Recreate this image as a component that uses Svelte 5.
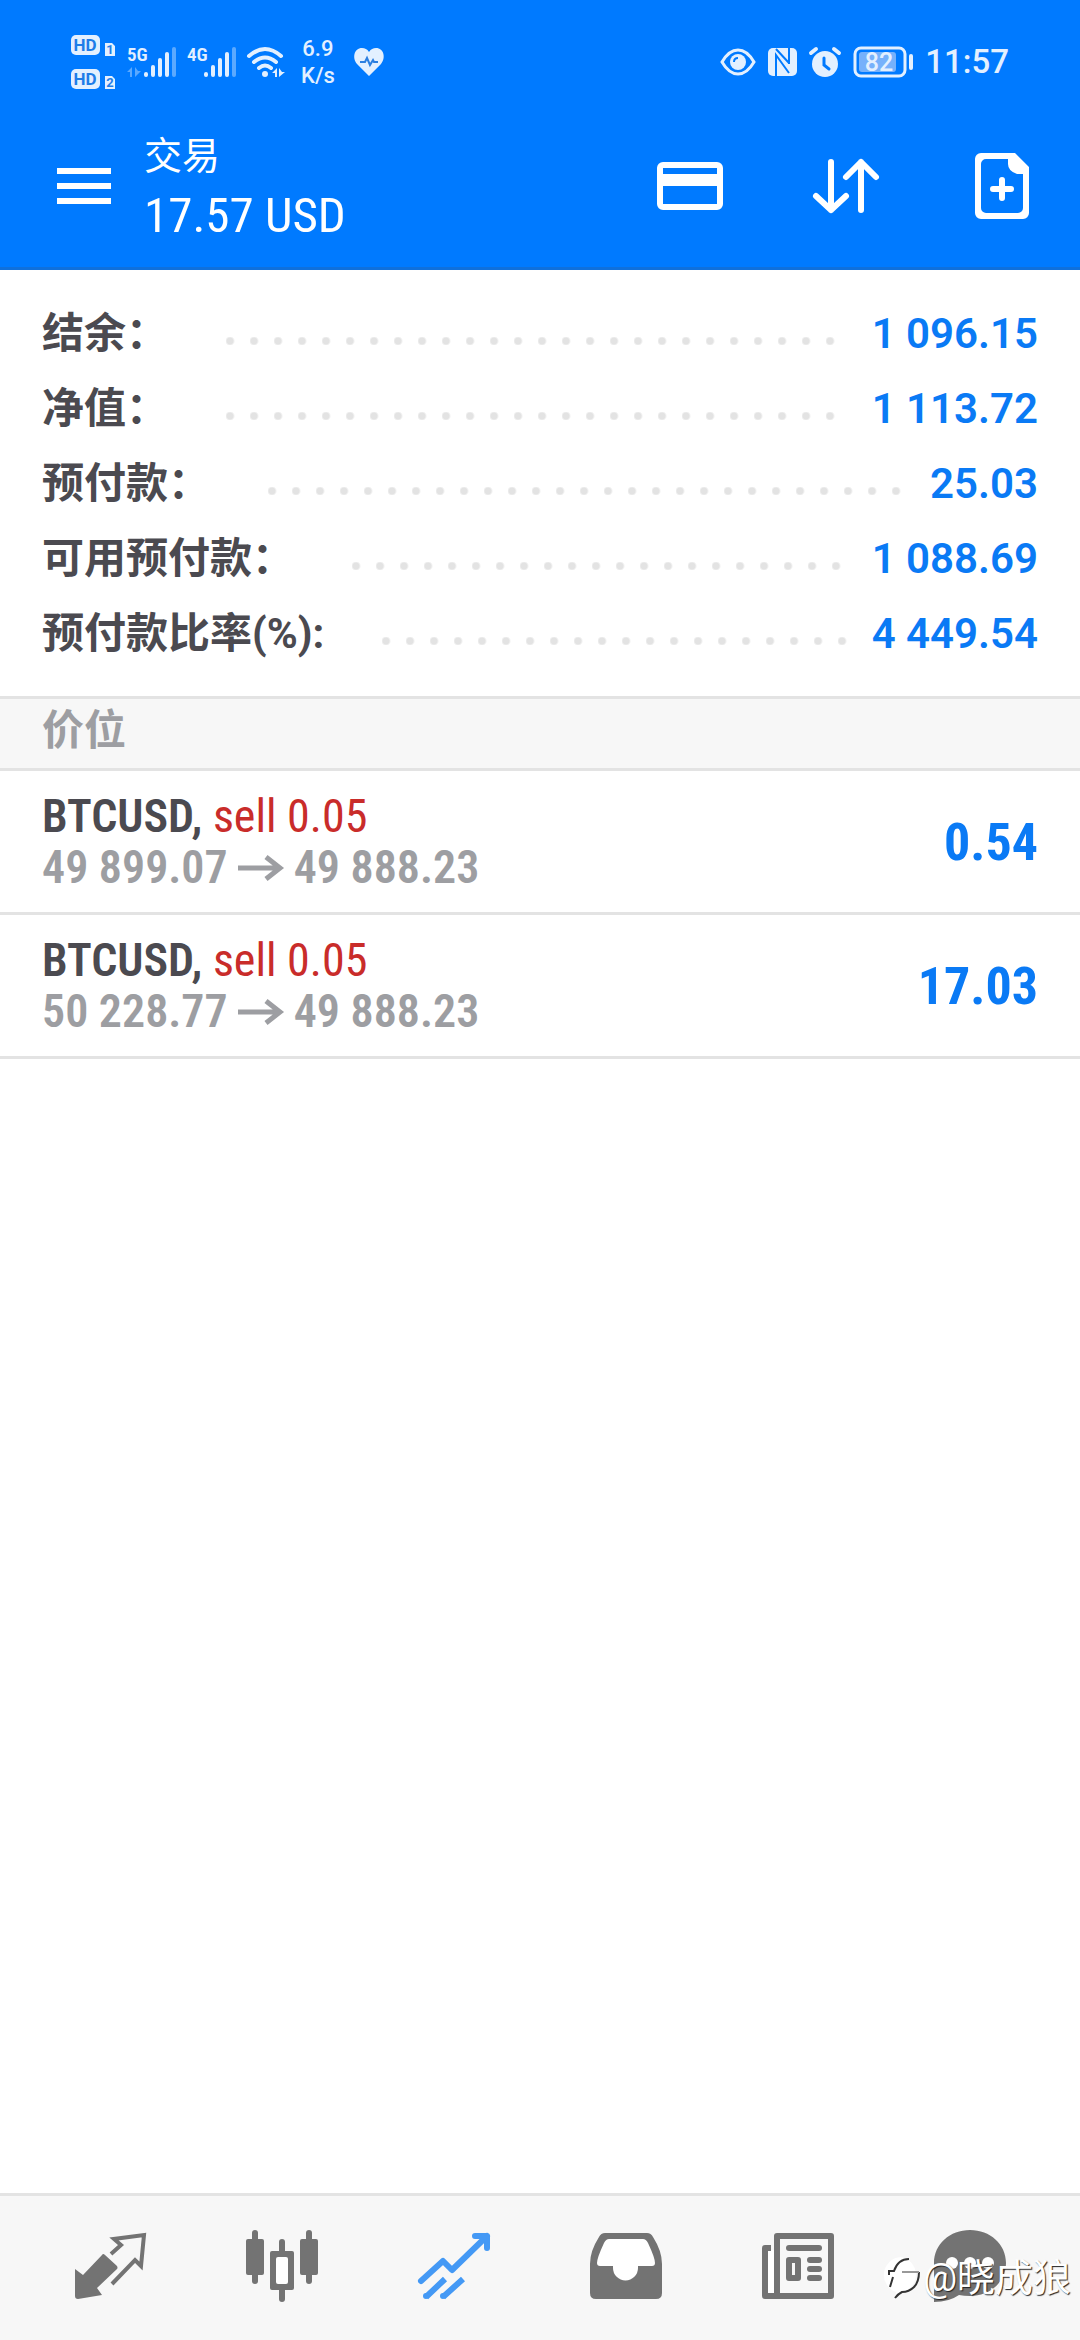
<script>
  const summary = [
    { label: "结余：", value: "1 096.15" },
    { label: "净值：", value: "1 113.72" },
    { label: "预付款：", value: "25.03" },
    { label: "可用预付款：", value: "1 088.69" },
    { label: "预付款比率(%):", value: "4 449.54" },
  ];

  const positions = [
    { symbol: "BTCUSD", side: "sell 0.05", open: "49 899.07", now: "49 888.23", profit: "0.54" },
    { symbol: "BTCUSD", side: "sell 0.05", open: "50 228.77", now: "49 888.23", profit: "17.03" },
  ];

  const tabs = ["行情", "图表", "交易", "历史", "新闻", "消息"];
  let active = 2;
</script>

{#snippet signal(name, arrows)}
  <svg width="50" height="30" viewBox="0 0 50 30" fill="#e3f0ff">
    <text class="narrow" x="0" y="14" font-size="19" font-weight="600">{name}</text>
    {#if arrows}
      <path d="M0 25l5-5v10H3v-5zM8 20v10l6-6H11z" opacity="0.4" />
    {/if}
    <rect x="17" y="25" width="4" height="5" rx="2" />
    <rect x="24" y="18" width="4" height="12" rx="2" />
    <rect x="31" y="11" width="4" height="19" rx="2" />
    <rect x="38" y="5" width="4" height="25" rx="2" />
    <rect x="45" y="0" width="4" height="30" rx="2" opacity="0.4" />
  </svg>
{/snippet}

<div class="screen">
  <header>
    <div class="status">
      <div class="group left">
        <svg width="46" height="56" viewBox="0 0 46 56" fill="#e3f0ff">
          <rect x="0" y="1" width="29" height="20" rx="5" />
          <rect x="0" y="35" width="29" height="20" rx="5" />
          <path d="M34 9h7l3 3v10H34zM34 42h7l3 3v10H34z" />
          <g class="cut">
            <text x="14" y="17" font-size="17">HD</text>
            <text x="14" y="51" font-size="17">HD</text>
            <text x="39" y="20" font-size="13">1</text>
            <text x="39" y="53" font-size="13">2</text>
          </g>
        </svg>
        {@render signal("5G", true)}
        {@render signal("4G", false)}
        <svg width="38" height="32" viewBox="0 0 38 32" fill="none" stroke="#e3f0ff" stroke-width="4" stroke-linecap="round">
          <path d="M2 10Q18-4 34 10M7 16Q18 7 29 16M12 22Q18 17 24 22" />
          <circle cx="18" cy="28" r="3" fill="#e3f0ff" stroke="none" />
          <path d="M25 27l5-5v9h-2v-4zM32 22v9l6-5h-3z" fill="#e3f0ff" stroke="none" />
        </svg>
        <div class="speed">6.9<br />K/s</div>
        <svg width="30" height="28" viewBox="0 0 30 28">
          <path d="M15 28L3 16C-2 10 0 0 8 0c3 0 5 1 7 4 2-3 4-4 7-4 8 0 10 10 5 16z" fill="#e3f0ff" />
          <path d="M6 14h5l2-4 3 7 3-5 1 2h4" fill="none" stroke="#2c7fe0" stroke-width="2" />
        </svg>
      </div>
      <div class="group right">
        <svg width="36" height="28" viewBox="0 0 36 28">
          <path d="M2 14Q9 2 18 2t16 12Q27 26 18 26T2 14z" fill="none" stroke="#e3f0ff" stroke-width="3" />
          <circle cx="18" cy="14" r="8" fill="#e3f0ff" />
          <path d="M14 14q0-4 4-4" fill="none" stroke="#007aff" stroke-width="2" />
        </svg>
        <svg width="29" height="28" viewBox="0 0 29 28">
          <rect width="29" height="28" rx="5" fill="#e3f0ff" />
          <path d="M8 1l13 14M8 28V7l13 18M21 0v16" fill="none" stroke="#007aff" stroke-width="2" />
        </svg>
        <svg width="32" height="30" viewBox="0 0 32 30">
          <circle cx="16" cy="17" r="13" fill="#e3f0ff" />
          <path d="M2 6l5-4M30 6l-5-4" stroke="#e3f0ff" stroke-width="4" stroke-linecap="round" />
          <path d="M15 11v7l5 4" fill="none" stroke="#007aff" stroke-width="3" stroke-linecap="round" />
        </svg>
        <svg width="60" height="32" viewBox="0 0 60 32">
          <rect x="2" y="2" width="50" height="28" rx="6" fill="none" stroke="#e3f0ff" stroke-width="3" />
          <rect x="6" y="6" width="37" height="20" rx="3" fill="#76b1fb" />
          <rect x="56" y="8" width="4" height="16" rx="2" fill="#e3f0ff" />
          <text x="26" y="25" font-size="25" font-weight="500" text-anchor="middle">82</text>
        </svg>
        <time>11:57</time>
      </div>
    </div>

    <div class="appbar">
      <button class="menu" aria-label="菜单">
        <svg width="54" height="36" viewBox="0 0 54 36" fill="#fff">
          <path d="M0 0h54v6H0zM0 15h54v6H0zM0 30h54v6H0z" />
        </svg>
      </button>
      <h1>
        <span class="title">交易</span>
        <span class="total narrow">17.57 USD</span>
      </h1>
      <div class="actions">
        <button aria-label="入金">
          <svg width="66" height="66" viewBox="0 0 66 66">
            <rect x="3" y="12" width="60" height="42" rx="3" fill="none" stroke="#fff" stroke-width="6" />
            <path d="M3 21h60v12H3z" fill="#fff" />
          </svg>
        </button>
        <button aria-label="排序">
          <svg width="66" height="66" viewBox="0 0 66 66" fill="none" stroke="#fff" stroke-width="6" stroke-linecap="round" stroke-linejoin="round">
            <path d="M18 9v48M3 43l15 14 15-14M48 57V9M33 24L48 9l15 15" />
          </svg>
        </button>
        <button aria-label="新订单">
          <svg width="66" height="66" viewBox="0 0 66 66">
            <path d="M12 0h34l14 14v46a6 6 0 0 1-6 6H12a6 6 0 0 1-6-6V6a6 6 0 0 1 6-6zM17 6a5 5 0 0 0-5 5v44a5 5 0 0 0 5 5h32a5 5 0 0 0 5-5V21h-6q-9-3-9-10V6z" fill="#fff" fill-rule="evenodd" />
            <path d="M33 27v18M24 36h18" stroke="#fff" stroke-width="6" stroke-linecap="round" />
          </svg>
        </button>
      </div>
    </div>
  </header>

  <main>
    <dl class="summary">
      {#each summary as row}
        <div class="line">
          <dt>{row.label}</dt>
          <span class="dots"></span>
          <dd>{row.value}</dd>
        </div>
      {/each}
    </dl>

    <h2>价位</h2>

    <ul>
      {#each positions as p}
        <li class="narrow">
          <div>
            <p class="symbol">{p.symbol}, <span>{p.side}</span></p>
            <p class="prices">
              {p.open}
              <svg width="46" height="26" viewBox="0 0 46 26" fill="none" stroke="#9d9ea2" stroke-width="5">
                <path d="M0 13h42M28 2l14 11-14 11" />
              </svg>
              {p.now}
            </p>
          </div>
          <strong>{p.profit}</strong>
        </li>
      {/each}
    </ul>
  </main>

  <nav>
    {#each tabs as tab, i}
      <button class:active={i === active} aria-label={tab} on:click={() => (active = i)}>
        <svg width="72" height="72" viewBox="0 0 72 72" fill="currentColor">
          {#if i === 0}
            <path d="M1 39l8 6 19-20q1-2 3 0l12 11q1 2 0 3L23 58l5 7-24 4q-3 0-3-3z" />
            <path d="M37 24l10-9-7-6 30-4-3 31-6-6-23 24" fill="none" stroke="currentColor" stroke-width="4" />
          {:else if i === 1}
            <rect x="6" width="6" height="54" rx="3" />
            <rect y="9" width="18" height="36" rx="2" />
            <rect x="60" width="6" height="54" rx="3" />
            <rect x="54" y="9" width="18" height="36" rx="2" />
            <rect x="33" y="9" width="6" height="63" rx="3" />
            <rect x="24" y="21" width="24" height="39" rx="2" />
            <rect x="30" y="27" width="12" height="27" rx="2" fill="#fff" />
          {:else if i === 2}
            <g fill="none" stroke="currentColor" stroke-width="6">
              <path d="M3 51l22-20 9 9L69 6M57 6h12v12" stroke-linecap="round" stroke-linejoin="round" />
              <path d="M8 67l19-18M25 67l20-18" />
            </g>
            <path d="M60 6h10v10z" />
            <circle cx="8" cy="66" r="3" />
            <circle cx="25" cy="66" r="3" />
          {:else if i === 3}
            <path d="M15 3h42q4 0 6 4 9 14 9 27v29q0 6-6 6H6q-6 0-6-6V34Q0 21 9 7q2-4 6-4z" />
            <path d="M19 9h34q3 0 5 4 7 15 7 20 0 3-3 3H48v2a12 12 0 0 1-25 0v-2H10q-3 0-3-3 0-5 7-20 2-4 5-4z" fill="#fff" />
          {:else if i === 4}
            <path d="M6 20h6v43H6z" fill="#fff" />
            <path d="M9 18H3v48h12" fill="none" stroke="currentColor" stroke-width="6" stroke-linejoin="round" />
            <path d="M15 6h54v60H15z" fill="none" stroke="currentColor" stroke-width="6" stroke-linejoin="round" />
            <rect x="24" y="15" width="36" height="6" rx="3" />
            <path d="M27 27h9q3 0 3 3v18q0 3-3 3h-9q-3 0-3-3V30q0-3 3-3zM30 33v12h3V33z" fill-rule="evenodd" />
            <rect x="45" y="27" width="15" height="6" rx="3" />
            <rect x="45" y="36" width="15" height="6" rx="3" />
            <rect x="45" y="45" width="15" height="6" rx="3" />
          {:else}
            <path d="M36 0c20 0 36 14 36 33S56 66 36 66q-6 0-11-1-10 7-25 7V33C0 14 16 0 36 0z" />
            <g fill="#fff">
              <circle cx="18" cy="33" r="6" />
              <circle cx="36" cy="33" r="6" />
              <circle cx="54" cy="33" r="6" />
            </g>
          {/if}
        </svg>
      </button>
    {/each}
  </nav>

  <div class="author">
    <svg width="38" height="42" viewBox="0 0 38 42">
      <path d="M18 0a18 18 0 0 1 2 35q-4 2-8 6l1-6A18 18 0 0 1 18 0z" fill="#fff" />
      <g fill="none" stroke="#333" stroke-width="2">
        <path d="M6 18v-4h5Q15 2 26 2M10 20L7 30" />
        <path d="M36 15q0 10-5 15-5 5-12 5-4 2-7 6" />
        <path d="M19 15h17" stroke="#999" />
      </g>
    </svg>
    <span>@晓成狼</span>
  </div>
</div>

<style>
  :global(body) {
    background: #fff;
  }

  .screen {
    position: relative;
    display: flex;
    flex-direction: column;
    min-height: 100vh;
    font-family: Roboto, "Noto Sans CJK SC", sans-serif;
    color: #4b4a50;
  }

  .narrow {
    font-family: "Roboto Condensed", "Liberation Sans Narrow", "Noto Sans CJK SC", sans-serif;
  }

  svg {
    display: block;
    flex: none;
    overflow: visible;
  }

  button {
    display: flex;
    align-items: center;
    justify-content: center;
    padding: 0;
    border: none;
    background: none;
    color: inherit;
  }

  header {
    background: #007aff;
    border-bottom: 3px solid #0f70dc;
    color: #fff;
  }

  .status {
    display: flex;
    justify-content: space-between;
    align-items: center;
    box-sizing: border-box;
    height: 105px;
    padding: 18px 71px 0;
    color: #e3f0ff;
  }

  .status text {
    fill: #e3f0ff;
  }

  .group {
    display: flex;
    align-items: center;
  }

  .left {
    gap: 10px;
  }

  .right {
    gap: 12px;
  }

  .status .cut text {
    fill: #1f7de8;
    font-weight: 700;
    text-anchor: middle;
  }

  .speed {
    padding: 0 9px 0 6px;
    font-size: 22px;
    line-height: 27px;
    font-weight: 500;
    text-align: center;
  }

  time {
    font-size: 33px;
    font-weight: 500;
    line-height: 32px;
  }

  .appbar {
    display: flex;
    align-items: center;
    height: 162px;
    padding: 0 45px 0 57px;
  }

  h1 {
    display: flex;
    flex-direction: column;
    flex: 1;
    margin: 0 0 0 33px;
    font-weight: 400;
    line-height: 59px;
  }

  .title {
    font-size: 38px;
  }

  .total {
    font-size: 49px;
  }

  .actions {
    display: flex;
    gap: 90px;
  }

  main {
    flex: 1;
  }

  .summary {
    margin: 0;
    padding: 26px 42px 25px;
    border-bottom: 3px solid #e3e3e3;
    font-size: 42px;
    line-height: 75px;
    font-weight: 700;
  }

  .line {
    display: flex;
    align-items: center;
  }

  .dots {
    flex: 1;
    height: 8px;
    margin: 14px 22px 0 58px;
    background: radial-gradient(circle at 4px 4px, #e3e3e3 3px, transparent 5px) 0 0 / 24px 8px repeat-x;
  }

  dd {
    margin: 0;
    color: #0a7af5;
    font-weight: 600;
  }

  h2 {
    margin: 0;
    padding: 0 42px 6px;
    border-bottom: 3px solid #e3e3e3;
    background: #f7f7f7;
    color: #9d9ea2;
    font-size: 42px;
    line-height: 63px;
    font-weight: 700;
  }

  ul {
    margin: 0;
    padding: 0;
    list-style: none;
  }

  li {
    display: flex;
    justify-content: space-between;
    align-items: center;
    padding: 20px 42px 19px;
    border-bottom: 3px solid #e3e3e3;
    font-size: 46px;
    font-weight: 600;
    line-height: 51px;
  }

  p {
    margin: 0;
  }

  .symbol span {
    color: #c92c2a;
    font-weight: 400;
  }

  .prices {
    display: flex;
    align-items: center;
    gap: 10px;
    color: #9d9ea2;
  }

  strong {
    color: #0a7af5;
    font-size: 52px;
    font-weight: 700;
  }

  nav {
    display: grid;
    grid-template-columns: repeat(6, 1fr);
    height: 140px;
    padding: 0 24px 4px;
    border-top: 3px solid #e3e3e3;
    background: #f7f7f7;
    color: #737373;
  }

  .active {
    color: #4499f5;
  }

  .author {
    position: absolute;
    right: 9px;
    bottom: 34px;
    display: flex;
    align-items: center;
    gap: 2px;
    color: #fff;
    font-size: 38px;
    line-height: 56px;
    text-shadow: 1px 1px 1px #222;
  }
</style>
